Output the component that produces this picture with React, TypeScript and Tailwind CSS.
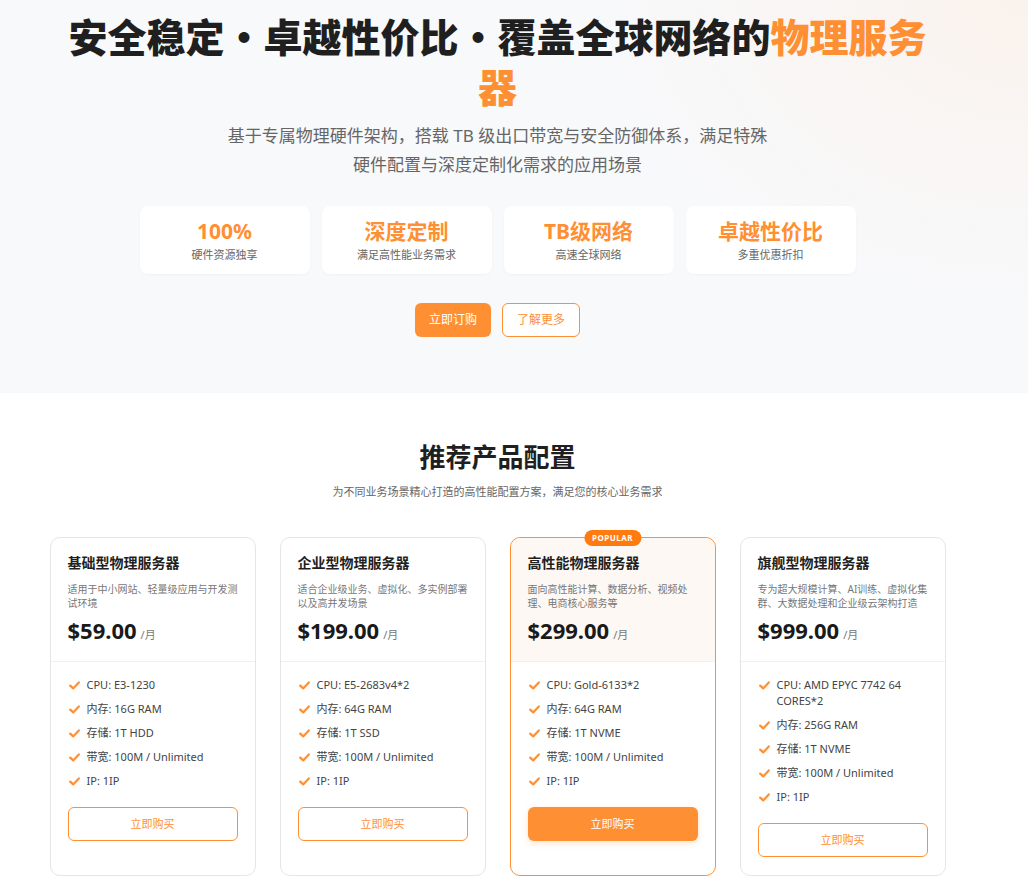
import React from "react";

const orange = "#ff8f33";

type Plan = {
  name: string;
  desc: string;
  price: string;
  specs: string[];
  popular?: boolean;
};

const plans: Plan[] = [
  {
    name: "基础型物理服务器",
    desc: "适用于中小网站、轻量级应用与开发测试环境",
    price: "$59.00",
    specs: ["CPU: E3-1230", "内存: 16G RAM", "存储: 1T HDD", "带宽: 100M / Unlimited", "IP: 1IP"],
  },
  {
    name: "企业型物理服务器",
    desc: "适合企业级业务、虚拟化、多实例部署以及高并发场景",
    price: "$199.00",
    specs: ["CPU: E5-2683v4*2", "内存: 64G RAM", "存储: 1T SSD", "带宽: 100M / Unlimited", "IP: 1IP"],
  },
  {
    name: "高性能物理服务器",
    desc: "面向高性能计算、数据分析、视频处理、电商核心服务等",
    price: "$299.00",
    specs: ["CPU: Gold-6133*2", "内存: 64G RAM", "存储: 1T NVME", "带宽: 100M / Unlimited", "IP: 1IP"],
    popular: true,
  },
  {
    name: "旗舰型物理服务器",
    desc: "专为超大规模计算、AI训练、虚拟化集群、大数据处理和企业级云架构打造",
    price: "$999.00",
    specs: ["CPU: AMD EPYC 7742 64 CORES*2", "内存: 256G RAM", "存储: 1T NVME", "带宽: 100M / Unlimited", "IP: 1IP"],
  },
];

const stats = [
  { v: "100%", l: "硬件资源独享" },
  { v: "深度定制", l: "满足高性能业务需求" },
  { v: "TB级网络", l: "高速全球网络" },
  { v: "卓越性价比", l: "多重优惠折扣" },
];

function CheckIcon() {
  return (
    <svg width="11" height="9" viewBox="0 0 11 9" className="shrink-0 mt-[4px]">
      <polyline points="1.2,4.6 4.2,7.4 9.8,1.4" fill="none" stroke={orange} strokeWidth="2.2" strokeLinecap="round" strokeLinejoin="round" />
    </svg>
  );
}

function PlanCard({ p }: { p: Plan }) {
  return (
    <div
      className={
        "relative flex flex-col rounded-[10px] border bg-white " +
        (p.popular ? "border-[#ff8f33]" : "border-[#e6e6e6]")
      }
    >
      {p.popular && (
        <div className="absolute left-1/2 top-[-8px] -translate-x-1/2 rounded-full bg-[#ff7b0f] px-[8px] h-[16px] flex items-center text-[8px] font-bold tracking-[0.5px] text-white">
          POPULAR
        </div>
      )}
      <div
        className={
          "px-[17px] pt-[14px] pb-[16px] border-b border-[#f0f0f0] rounded-t-[10px] " +
          (p.popular ? "bg-[#fdf8f3]" : "")
        }
      >
        <div className="text-[14px] leading-[22px] font-semibold text-[#1f1f1f]">{p.name}</div>
        <div className="mt-[8px] text-[10px] leading-[14px] text-[#777]">{p.desc}</div>
        <div className="mt-[5px] flex items-baseline gap-[4px]">
          <span className="text-[22px] leading-[30px] font-bold text-[#1a1a1a]">{p.price}</span>
          <span className="text-[11px] text-[#777]">/月</span>
        </div>
      </div>
      <div className="px-[17px] pt-[15px] pb-[18px] flex flex-col">
        <ul className="flex flex-col gap-[8px]">
          {p.specs.map((s) => (
            <li key={s} className="flex items-start gap-[7px] pl-[1px] text-[11px] leading-[16px] text-[#444]">
              <CheckIcon />
              <span>{s}</span>
            </li>
          ))}
        </ul>
        <button
          className={
            "mt-[18px] h-[34px] w-full rounded-[6px] text-[11px] " +
            (p.popular
              ? "bg-[#ff8f33] text-white shadow-[0_2px_6px_rgba(255,143,51,0.25)]"
              : "border border-[#ff8f33] bg-white text-[#ff8f33]")
          }
        >
          立即购买
        </button>
      </div>
    </div>
  );
}

export default function App() {
  return (
    <div className="w-[1028px] min-h-[894px] bg-white font-['Noto_Sans','Noto_Sans_CJK_SC',sans-serif]">
      <section className="w-full bg-[#f8f9fb] bg-[radial-gradient(ellipse_420px_300px_at_100%_0%,rgba(255,230,210,0.35),rgba(248,249,251,0))]">
        <div className="w-[995px] flex flex-col items-center pt-[10px] pb-[56px]">
          <h1 className="max-w-[880px] text-center text-[39px] leading-[50px] font-black text-[#1f1f1f] font-['Noto_Sans_CJK_SC',sans-serif]">
            安全稳定・卓越性价比・覆盖全球网络的<span className="text-[#ff8f33]">物理服务器</span>
          </h1>
          <p className="mt-[11px] text-center text-[17px] leading-[29px] text-[#666]">
            基于专属物理硬件架构，搭载 TB 级出口带宽与安全防御体系，满足特殊
            <br />
            硬件配置与深度定制化需求的应用场景
          </p>
          <div className="mt-[27px] grid w-[716px] grid-cols-4 gap-[12px]">
            {stats.map((s) => (
              <div key={s.l} className="flex h-[68px] flex-col items-center justify-center rounded-[8px] bg-white shadow-[0_1px_3px_rgba(0,0,0,0.03)]">
                <div className="text-[21px] leading-[26px] font-bold text-[#ff8f33]">{s.v}</div>
                <div className="mt-[3px] text-[11px] leading-[16px] text-[#666]">{s.l}</div>
              </div>
            ))}
          </div>
          <div className="mt-[29px] flex gap-[11px]">
            <button className="h-[34px] w-[76px] rounded-[6px] bg-[#ff8f33] text-[12px] text-white">立即订购</button>
            <button className="h-[34px] w-[78px] rounded-[6px] border border-[#ff8f33] bg-white text-[12px] text-[#ff8f33]">了解更多</button>
          </div>
        </div>
      </section>
      <section className="w-[995px] flex flex-col items-center pt-[46px] pb-[18px]">
        <h2 className="text-[26px] leading-[36px] font-bold text-[#1f1f1f]">推荐产品配置</h2>
        <p className="mt-[9px] text-[11px] leading-[16px] text-[#666]">为不同业务场景精心打造的高性能配置方案，满足您的核心业务需求</p>
        <div className="mt-[37px] grid w-[896px] grid-cols-4 gap-[24px]">
          {plans.map((p) => (
            <PlanCard key={p.name} p={p} />
          ))}
        </div>
      </section>
    </div>
  );
}
